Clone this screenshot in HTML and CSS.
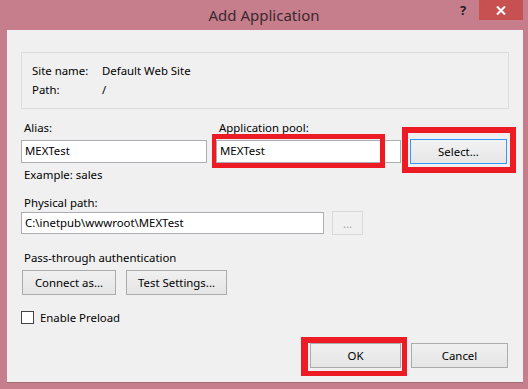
FILE: index.html
```html
<!DOCTYPE html>
<html>
<head>
    <title>Add Application</title>
    <meta name="viewport" content="width=device-width, initial-scale=1.0">
    <link rel="stylesheet" href="styles.css">
</head>
<body>
    <div class="window">
        <div class="titlebar">
            <span class="title">Add Application</span>
            <span class="help-btn">?</span>
            <span class="close-btn">
                <svg width="10" height="9" viewBox="0 0 10 9"><path d="M1 0.5 L9 8.5 M9 0.5 L1 8.5" stroke="#fff" stroke-width="2"/></svg>
            </span>
        </div>

        <div class="client">
            <div class="site-box">
                <span class="site-label">Site name:</span>
                <span>Default Web Site</span>
                <span class="site-label">Path:</span>
                <span>/</span>
            </div>

            <div class="alias-grid">
                <label class="field-label">Alias:</label>
                <label class="field-label">Application pool:</label>
                <span></span>
                <div class="textbox">MEXTest</div>
                <div class="textbox">MEXTest</div>
                <button class="btn btn-focus">Select...</button>
            </div>
            <div class="field-label hint">Example: sales</div>

            <div class="field-label path-label">Physical path:</div>
            <div class="path-row">
                <div class="textbox path-box">C:\inetpub\wwwroot\MEXTest</div>
                <button class="btn btn-disabled browse-btn">...</button>
            </div>

            <div class="field-label auth-label">Pass-through authentication</div>
            <div class="auth-row">
                <button class="btn connect-btn">Connect as...</button>
                <button class="btn test-btn">Test Settings...</button>
            </div>

            <div class="check-row">
                <span class="checkbox"></span>
                <span>Enable Preload</span>
            </div>

            <div class="footer">
                <button class="btn ok-btn">OK</button>
                <button class="btn cancel-btn">Cancel</button>
            </div>
        </div>

        <!-- red annotation boxes drawn over the dialog -->
        <div class="mark mark-pool"></div>
        <div class="mark mark-select"></div>
        <div class="mark mark-ok"></div>
    </div>
</body>
</html>
```

FILE: styles.css
```css
body {
    margin: 0;
    padding: 0;
    background-color: #c67d8c;
    font-family: "Noto Sans", Arial, sans-serif;
    font-size: 11.4px;
    color: #000;
}
.window {
    position: relative;
    width: 528px;
    height: 389px;
    overflow: hidden;
}
.titlebar {
    height: 29px;
    display: flex;
    justify-content: center;
    align-items: center;
    position: relative;
}
.title {
    font-size: 15px;
    color: #3a2a2e;
}
.help-btn {
    position: absolute;
    left: 460px;
    top: 1px;
    font-weight: bold;
    font-size: 13px;
    color: #222;
}
.close-btn {
    position: absolute;
    left: 479px;
    top: 0;
    width: 44px;
    height: 20px;
    background-color: #c75050;
    display: flex;
    justify-content: center;
    align-items: center;
}
.client {
    margin: 1px 5px 0 7px;
    height: 353px;
    box-sizing: border-box;
    background-color: #f0f0f0;
    border-bottom: 1px solid #9f6a75;
    padding: 22px 14px 0 14px;
}
.site-box {
    height: 57px;
    box-sizing: border-box;
    border: 1px solid #dcdcdc;
    padding: 10px 0 0 10px;
    display: grid;
    grid-template-columns: 70px 1fr;
    grid-auto-rows: 16px;
    row-gap: 3px;
    line-height: 16px;
}
.field-label {
    line-height: 16px;
    padding-left: 3px;
}
.alias-grid {
    margin-top: 11px;
    display: grid;
    grid-template-columns: 186px 185px 97px;
    column-gap: 9px;
    row-gap: 3px;
    align-items: center;
}
.textbox {
    height: 23px;
    box-sizing: border-box;
    border: 1px solid #abadb3;
    background-color: #fff;
    padding-left: 3px;
    line-height: 20px;
    white-space: nowrap;
    overflow: hidden;
}
.btn {
    font-family: inherit;
    font-size: 11.4px;
    color: #000;
    height: 25px;
    box-sizing: border-box;
    border: 1px solid #acacac;
    background: linear-gradient(#f0f0f0, #e5e5e5);
    padding: 0;
    margin: 0;
}
.btn-focus {
    border-color: #3399ff;
    background: linear-gradient(#f2f2f2, #e6e6e6);
}
.btn-disabled {
    border-color: #d9d9d9;
    background: #f0f0f0;
    color: #a0a0a0;
}
.hint {
    margin-top: 3px;
}
.path-label {
    margin-top: 12px;
}
.path-row {
    display: flex;
    align-items: center;
    height: 24px;
}
.path-box {
    width: 303px;
    height: 22px;
    line-height: 19px;
}
.browse-btn {
    width: 31px;
    height: 24px;
    margin-left: 8px;
}
.auth-label {
    margin-top: 15px;
}
.auth-row {
    display: flex;
    gap: 10px;
    margin-top: 4px;
    padding-left: 1px;
}
.connect-btn {
    width: 94px;
}
.test-btn {
    width: 101px;
}
.check-row {
    display: flex;
    align-items: center;
    gap: 6px;
    height: 16px;
    margin-top: 14px;
}
.checkbox {
    width: 13px;
    height: 13px;
    box-sizing: border-box;
    border: 1px solid #444;
    background-color: #fff;
}
.footer {
    display: flex;
    justify-content: flex-end;
    gap: 10px;
    margin-top: 18px;
    padding-right: 1px;
}
.ok-btn {
    width: 91px;
}
.cancel-btn {
    width: 97px;
}
.mark {
    position: absolute;
    box-sizing: border-box;
    border: 5px solid #ed1c24;
}
.mark-pool {
    left: 212px;
    top: 134px;
    width: 173px;
    height: 34px;
    border-left-width: 4px;
}
.mark-select {
    left: 402px;
    top: 127px;
    width: 114px;
    height: 46px;
    border-width: 6px;
}
.mark-ok {
    left: 301px;
    top: 337px;
    width: 106px;
    height: 39px;
    border-width: 6px 5px 5px 7px;
}
```
